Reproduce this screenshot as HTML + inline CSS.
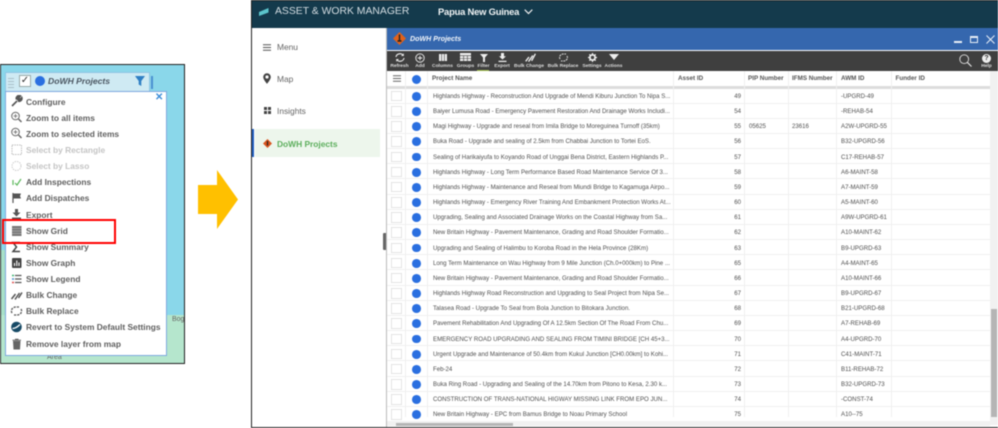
<!DOCTYPE html>
<html><head><meta charset="utf-8"><style>
*{box-sizing:border-box}
html,body{margin:0;padding:0;width:998px;height:428px;overflow:hidden;background:#fff;font-family:"Liberation Sans",sans-serif}
.a{position:absolute}
#soft{position:absolute;left:0;top:0;width:998px;height:428px;filter:blur(.4px)}
.mi{position:absolute;left:26px;font-size:8.4px;font-weight:bold;color:#5f5f5f;white-space:nowrap;line-height:12px}
.mi.d{color:#c4c4c4}
.ic{position:absolute;left:10px;width:13px;height:12px}
.tl{position:absolute;top:63.5px;font-size:4.9px;font-weight:bold;color:#ddd;transform:translateX(-50%);white-space:nowrap;line-height:6px}
.th{position:absolute;top:74px;font-size:6.3px;font-weight:bold;color:#555;white-space:nowrap;line-height:9px}
.r{position:absolute;left:387px;width:603px;height:15.17px;border-bottom:1.3px solid #f0f0f0}
.r span{position:absolute;top:3.5px;font-size:6.1px;color:#4f4f4f;white-space:nowrap;line-height:9px}
.r .cb{position:absolute;left:4px;top:2.6px;width:10.5px;height:10.5px;background:#fff;border:1px solid #e3e3e3}
.r .c{position:absolute;left:25.2px;top:3.5px;width:8.8px;height:8.8px;border-radius:50%;background:#2a6fe0}
.r .n{left:46px}.r .i{left:340px;width:14px;text-align:right}.r .w{left:454px}
.v{position:absolute;top:71px;height:346px;width:1px;background:#efefef}
</style></head><body><div id="soft">

<!-- LEFT MAP PANEL -->
<div class="a" style="left:0;top:64px;width:185px;height:300px;background:#8ad7ea;border:1.5px solid #222;overflow:hidden">
  <div class="a" style="left:0;top:185px;width:5px;height:115px;background:#a8e0c8"></div>
  <div class="a" style="left:0;top:250px;width:185px;height:50px;background:#b5e6cd"></div>
  <div class="a" style="left:171px;top:251px;font-size:7px;color:#666">Bog</div>
  <div class="a" style="left:46px;top:289px;font-size:7px;color:#666">Area</div>
  <div class="a" style="left:150px;top:11px;width:1.5px;height:13px;background:#4a90d0"></div>
</div>
<div class="a" style="left:5px;top:72px;width:145px;height:20px;background:#cfeaf3;border:1px solid #8fc4e4"></div>
<div class="a" style="left:8px;top:76px;width:6px;height:12px;background:repeating-linear-gradient(0deg,#a9c0c8 0 1px,transparent 1px 3px)"></div>
<div class="a" style="left:19px;top:75px;width:12px;height:12px;background:#fff;border:1px solid #9aa;font-size:10px;line-height:10px;color:#333;text-align:center">✓</div>
<div class="a" style="left:35px;top:76px;width:10px;height:10px;border-radius:50%;background:#2a6fe0"></div>
<div class="a" style="left:48px;top:76px;font-size:8.6px;font-weight:bold;font-style:italic;color:#4a5560;white-space:nowrap;line-height:10px">DoWH Projects</div>
<svg class="a" style="left:135px;top:76px" width="10" height="10" viewBox="0 0 10 10"><path d="M0 0H10L6.3 5V10L3.7 8.5V5Z" fill="#2f7fc4"/></svg>

<div class="a" style="left:5px;top:91px;width:162px;height:265px;background:#fff;border:1.3px solid #7ea9de"></div>
<div class="a" style="left:155px;top:92px;font-size:10px;color:#3c8dd8;line-height:11px;font-weight:bold">✕</div>

<div class="mi" style="top:95.5px">Configure</div>
<div class="mi" style="top:111.5px">Zoom to all items</div>
<div class="mi" style="top:127.5px">Zoom to selected items</div>
<div class="mi d" style="top:144px">Select by Rectangle</div>
<div class="mi d" style="top:160px">Select by Lasso</div>
<div class="mi" style="top:176px">Add Inspections</div>
<div class="mi" style="top:192px">Add Dispatches</div>
<div class="mi" style="top:208.5px">Export</div>
<div class="mi" style="top:224.5px">Show Grid</div>
<div class="mi" style="top:240.5px">Show Summary</div>
<div class="mi" style="top:256.5px">Show Graph</div>
<div class="mi" style="top:273px">Show Legend</div>
<div class="mi" style="top:289px">Bulk Change</div>
<div class="mi" style="top:305px">Bulk Replace</div>
<div class="mi" style="top:321px">Revert to System Default Settings</div>
<div class="mi" style="top:337.5px">Remove layer from map</div>

<!-- menu icons -->
<svg class="ic" style="top:95px" viewBox="0 0 13 12"><path d="M2 11L7 6M6.5 4.5A2.8 2.8 0 0 1 10.5 1L8.7 3L10 4.3L11.8 2.6A2.8 2.8 0 0 1 8 6" fill="#555" stroke="#555" stroke-width="1.6"/></svg>
<svg class="ic" style="top:111px" viewBox="0 0 13 12"><circle cx="5.5" cy="5" r="3.8" fill="none" stroke="#666"/><path d="M8.5 8L11.5 11" stroke="#666" stroke-width="1.5"/><path d="M3.5 5H7.5M5.5 3V7" stroke="#666" stroke-width=".8"/></svg>
<svg class="ic" style="top:127px" viewBox="0 0 13 12"><circle cx="5.5" cy="5" r="3.8" fill="none" stroke="#666"/><path d="M8.5 8L11.5 11" stroke="#666" stroke-width="1.5"/><path d="M3.5 5H7.5M5.5 3V7" stroke="#666" stroke-width=".8"/></svg>
<svg class="ic" style="top:144px" viewBox="0 0 13 12"><rect x="2" y="1" width="9.5" height="9.5" fill="none" stroke="#bbb" stroke-dasharray="1.4 1"/></svg>
<svg class="ic" style="top:160px" viewBox="0 0 13 12"><circle cx="6.5" cy="6" r="4.5" fill="none" stroke="#ccc" stroke-dasharray="1.4 1"/></svg>
<svg class="ic" style="top:176px" viewBox="0 0 13 12"><path d="M3 4V9M5 7L7 9L11 3" fill="none" stroke="#5cb85c" stroke-width="1.2"/></svg>
<svg class="ic" style="top:192px" viewBox="0 0 13 12"><path d="M3 1V11" stroke="#555" stroke-width="1.2"/><path d="M3 1.5H11L10 4L11 6.5H3Z" fill="#555"/></svg>
<svg class="ic" style="top:208px" viewBox="0 0 13 12"><path d="M5 1H8V4.5H10.5L6.5 8.5L2.5 4.5H5ZM2 9.5H11V11H2Z" fill="#555"/></svg>
<svg class="ic" style="top:224.5px" viewBox="0 0 13 12"><rect x="2" y="1" width="9.5" height="10" fill="#777"/><path d="M2 3.5H11.5M2 6H11.5M2 8.5H11.5" stroke="#ccc" stroke-width=".6"/></svg>
<svg class="ic" style="top:240.5px" viewBox="0 0 13 12"><path d="M10 1.5H3L6.5 6L3 10.5H10" fill="none" stroke="#444" stroke-width="1.5"/></svg>
<svg class="ic" style="top:257px" viewBox="0 0 13 12"><rect x="2" y="1" width="9.5" height="10" rx="1" fill="#444"/><path d="M4.5 9V6M6.8 9V3.5M9 9V5.5" stroke="#fff" stroke-width="1.1"/></svg>
<svg class="ic" style="top:273px" viewBox="0 0 13 12"><path d="M2 2.5H4" stroke="#3cb371" stroke-width="1.5"/><path d="M2 6H4" stroke="#4a90d0" stroke-width="1.5"/><path d="M2 9.5H4" stroke="#e05050" stroke-width="1.5"/><path d="M5 2.5H11.5M5 6H11.5M5 9.5H11.5" stroke="#555" stroke-width="1.2"/></svg>
<svg class="ic" style="top:289px" viewBox="0 0 13 12"><path d="M1.5 10L5.5 5M5 10.5L9.5 4M8.5 9L12 3.5" stroke="#555" stroke-width="1.5" fill="none"/></svg>
<svg class="ic" style="top:305px" viewBox="0 0 13 12"><path d="M2 8A4.5 4 0 0 1 6 2H9M11 4A4.5 4 0 0 1 7 10H4" fill="none" stroke="#555" stroke-width="1.3" stroke-dasharray="2.2 1"/></svg>
<svg class="ic" style="top:321px" viewBox="0 0 13 12"><circle cx="6.5" cy="6" r="5.3" fill="#174a66"/><path d="M2.5 7.5Q6 7.5 10 3.5" stroke="#fff" stroke-width="1.3" fill="none"/></svg>
<svg class="ic" style="top:337.5px" viewBox="0 0 13 12"><path d="M3 3H10.5L10 11.5H3.5ZM2.5 1.8H11V2.8H2.5ZM5 .8H8.5V1.8H5Z" fill="#666"/></svg>

<!-- red box -->
<div class="a" style="left:2px;top:219px;width:114px;height:25px;border:2.3px solid #f00"></div>

<!-- ARROW -->
<svg class="a" style="left:198px;top:170px" width="41" height="60" viewBox="0 0 41 60"><path d="M0 15H19V0L40 29.5L19 59V44H0Z" fill="#ffc000"/></svg>

<!-- RIGHT WINDOW -->
<div class="a" style="left:251px;top:0;width:747px;height:428px;background:#fff;border:1.5px solid #222;border-right:0"></div>
<div class="a" style="left:252px;top:1px;width:746px;height:27px;background:#143a4c"></div>
<svg class="a" style="left:259px;top:8px" width="10" height="8" viewBox="0 0 10 8"><path d="M0 4L9.5 0V4.5L0 8Z" fill="#5cc5cc"/></svg>
<div class="a" style="left:275px;top:4.5px;font-size:10.4px;color:#d4dde2;white-space:nowrap;line-height:14px">ASSET &amp; WORK MANAGER</div>
<div class="a" style="left:438px;top:5px;font-size:9.4px;font-weight:bold;letter-spacing:-.2px;color:#f2f5f6;white-space:nowrap;line-height:14px">Papua New Guinea</div>
<svg class="a" style="left:524px;top:9px" width="9" height="6" viewBox="0 0 9 6"><path d="M.7 .7L4.5 4.5L8.3 .7" fill="none" stroke="#eee" stroke-width="1.2"/></svg>

<!-- sidebar -->
<svg class="a" style="left:263px;top:44px" width="8" height="7" viewBox="0 0 8 7"><path d="M0 .8H8M0 3.5H8M0 6.2H8" stroke="#555" stroke-width="1"/></svg>
<div class="a" style="left:277px;top:41px;font-size:8.4px;color:#666;line-height:12px">Menu</div>
<svg class="a" style="left:263px;top:73px" width="8" height="11" viewBox="0 0 8 11"><path d="M4 0.2A3.8 3.8 0 0 1 7.8 4C7.8 6.5 4 10.8 4 10.8S.2 6.5 .2 4A3.8 3.8 0 0 1 4 .2Z" fill="#444"/><circle cx="4" cy="4" r="1.6" fill="#fff"/></svg>
<div class="a" style="left:277px;top:73px;font-size:8.4px;color:#666;line-height:12px">Map</div>
<svg class="a" style="left:264px;top:107px" width="7" height="7" viewBox="0 0 7 7"><path d="M0 0H3V3H0ZM4 0H7V3H4ZM0 4H3V7H0ZM4 4H7V7H4Z" fill="#444"/></svg>
<div class="a" style="left:277px;top:105px;font-size:8.4px;color:#666;line-height:12px">Insights</div>
<div class="a" style="left:252px;top:129px;width:2px;height:28px;background:#1f5fc0"></div>
<div class="a" style="left:255px;top:129px;width:125px;height:28px;background:#edf6ec"></div>
<svg class="a" style="left:263px;top:139px" width="9" height="9" viewBox="0 0 9 9"><path d="M4.5 0L9 4.5L4.5 9L0 4.5Z" fill="#d9541e"/><path d="M4.5 2V6.5" stroke="#222" stroke-width="1.2"/></svg>
<div class="a" style="left:277px;top:138px;font-size:8.4px;font-weight:bold;color:#5cae5c;line-height:12px;white-space:nowrap">DoWH Projects</div>
<div class="a" style="left:383px;top:233px;width:4px;height:17px;background:#666;border-radius:1px"></div>
<div class="a" style="left:994px;top:233px;width:4px;height:17px;background:#666;border-radius:1px"></div>

<!-- window title -->
<div class="a" style="left:386px;top:28px;width:612px;height:22px;background:#3567ae"></div>
<div class="a" style="left:386px;top:28px;width:1px;height:400px;background:#bbb"></div>
<svg class="a" style="left:393px;top:32px" width="13" height="13" viewBox="0 0 13 13"><path d="M6.5 0L13 6.5L6.5 13L0 6.5Z" fill="#e2621b"/><path d="M6.5 2.5V9M4.5 9H8.5" stroke="#222" stroke-width="1.4" fill="none"/></svg>
<div class="a" style="left:410px;top:34px;font-size:7.1px;font-weight:bold;font-style:italic;color:#f2f5fa;white-space:nowrap;line-height:10px">DoWH Projects</div>
<div class="a" style="left:954px;top:41px;width:8px;height:1.6px;background:#e8eef6"></div>
<div class="a" style="left:970px;top:36px;width:8px;height:7px;border:1px solid #e8eef6;border-top-width:2px"></div>
<svg class="a" style="left:986px;top:35px" width="9" height="9" viewBox="0 0 9 9"><path d="M.5 .5L8.5 8.5M8.5 .5L.5 8.5" stroke="#e8eef6" stroke-width="1"/></svg>

<!-- toolbar -->
<div class="a" style="left:387px;top:51px;width:611px;height:20px;background:#3f3f3f"></div>
<svg class="a" style="left:394.5px;top:53px" width="10" height="9" viewBox="0 0 10 9"><path d="M1 4A4 3.6 0 0 1 8 2M9 5A4 3.6 0 0 1 2 7" fill="none" stroke="#eee" stroke-width="1.1"/><path d="M8.8 .3V3H6ZM1.2 8.7V6H4Z" fill="#eee"/></svg>
<svg class="a" style="left:415px;top:53px" width="10" height="10" viewBox="0 0 10 10"><circle cx="5" cy="5" r="4.2" fill="none" stroke="#eee" stroke-width=".9"/><path d="M2.7 5H7.3M5 2.7V7.3" stroke="#eee" stroke-width=".9"/></svg>
<svg class="a" style="left:439px;top:54px" width="8" height="7" viewBox="0 0 8 7"><path d="M0 0H2.3V7H0ZM2.9 0H5.1V7H2.9ZM5.7 0H8V7H5.7Z" fill="#eee"/></svg>
<svg class="a" style="left:460px;top:53px" width="11" height="8" viewBox="0 0 11 8"><path d="M0 0H11V2.4H0ZM0 3H3.3V5.2H0ZM3.9 3H7.1V5.2H3.9ZM7.7 3H11V5.2H7.7ZM0 5.8H3.3V8H0ZM3.9 5.8H7.1V8H3.9ZM7.7 5.8H11V8H7.7Z" fill="#eee"/></svg>
<svg class="a" style="left:479.5px;top:54px" width="8" height="8" viewBox="0 0 8 8"><path d="M0 0H8L5 3.5V8H3V3.5Z" fill="#eee"/></svg>
<div class="a" style="left:477px;top:69.5px;width:12px;height:1.3px;background:#a3c24a"></div>
<svg class="a" style="left:497.5px;top:53px" width="9" height="9" viewBox="0 0 9 9"><path d="M3 0H6V3.2H8L4.5 6.5L1 3.2H3ZM.5 7.7H8.5V9H.5Z" fill="#eee"/></svg>
<svg class="a" style="left:525px;top:53px" width="11" height="9" viewBox="0 0 11 9"><path d="M.7 8.3L4 4M3.5 8.6L7.8 2.5M6.6 7.8L10.4 .8" stroke="#eee" stroke-width="1.4" fill="none"/></svg>
<svg class="a" style="left:558.5px;top:53px" width="9" height="9" viewBox="0 0 9 9"><path d="M1 6A3.6 3.4 0 0 1 4 1H7M8 3A3.6 3.4 0 0 1 5 8H2" fill="none" stroke="#ddd" stroke-width="1" stroke-dasharray="2 .8"/></svg>
<svg class="a" style="left:588px;top:53px" width="9" height="9" viewBox="0 0 9 9"><circle cx="4.5" cy="4.5" r="2.6" fill="none" stroke="#eee" stroke-width="1.8"/><path d="M4.5 0V1.8M4.5 7.2V9M0 4.5H1.8M7.2 4.5H9M1.3 1.3L2.5 2.5M6.5 6.5L7.7 7.7M7.7 1.3L6.5 2.5M2.5 6.5L1.3 7.7" stroke="#eee" stroke-width="1.2"/></svg>
<svg class="a" style="left:609px;top:54px" width="10" height="6" viewBox="0 0 10 6"><path d="M0 0H10L5 6Z" fill="#eee"/></svg>
<div class="tl" style="left:399.5px">Refresh</div><div class="tl" style="left:420px">Add</div><div class="tl" style="left:442.5px">Columns</div><div class="tl" style="left:465.5px">Groups</div><div class="tl" style="left:483.5px">Filter</div><div class="tl" style="left:502px">Export</div><div class="tl" style="left:529px">Bulk Change</div><div class="tl" style="left:563px">Bulk Replace</div><div class="tl" style="left:592px">Settings</div><div class="tl" style="left:613.5px">Actions</div><div class="tl" style="left:986.5px">Help</div>
<svg class="a" style="left:959px;top:54px" width="13" height="13" viewBox="0 0 13 13"><circle cx="5.2" cy="5.2" r="4.4" fill="none" stroke="#e0e0e0" stroke-width=".9"/><path d="M8.4 8.4L12.5 12.5" stroke="#e0e0e0" stroke-width="1.2"/></svg>
<div class="a" style="left:982px;top:53.5px;width:9px;height:9px;border-radius:50%;background:#eee;color:#333;font-size:7px;font-weight:bold;text-align:center;line-height:9px">?</div>

<!-- grid header -->
<svg class="a" style="left:392.5px;top:75px" width="8" height="7" viewBox="0 0 8 7"><path d="M0 .8H8M0 3.5H8M0 6.2H8" stroke="#666" stroke-width="1"/></svg>
<div class="a" style="left:412px;top:74.5px;width:9px;height:9px;border-radius:50%;background:#2a6fe0"></div>
<div class="th" style="left:432px">Project Name</div><div class="th" style="left:678px">Asset ID</div><div class="th" style="left:748px">PIP Number</div><div class="th" style="left:792px">IFMS Number</div><div class="th" style="left:841px">AWM ID</div><div class="th" style="left:895.5px">Funder ID</div>
<div class="a" style="left:387px;top:86px;width:603px;height:2.5px;background:#dcdcdc"></div>

<!-- rows -->
<div class="r" style="top:88.4px"><i class="cb"></i><i class="c"></i><span class="n">Highlands Highway - Reconstruction And Upgrade of Mendi Kiburu Junction To Nipa S...</span><span class="i">49</span><span class="w">-UPGRD-49</span></div>
<div class="r" style="top:103.6px"><i class="cb"></i><i class="c"></i><span class="n">Baiyer Lumusa Road - Emergency Pavement Restoration And Drainage Works Includi...</span><span class="i">54</span><span class="w">-REHAB-54</span></div>
<div class="r" style="top:118.7px"><i class="cb"></i><i class="c"></i><span class="n">Magi Highway - Upgrade and reseal from Imila Bridge to Moreguinea Turnoff (35km)</span><span class="i">55</span><span style="left:362px">05625</span><span style="left:405px">23616</span><span class="w">A2W-UPGRD-55</span></div>
<div class="r" style="top:133.9px"><i class="cb"></i><i class="c"></i><span class="n">Buka Road - Upgrade and sealing of 2.5km from Chabbai Junction to Tortei EoS.</span><span class="i">56</span><span class="w">B32-UPGRD-56</span></div>
<div class="r" style="top:149.1px"><i class="cb"></i><i class="c"></i><span class="n">Sealing of Harikaiyufa to Koyando Road of Unggai Bena District, Eastern Highlands P...</span><span class="i">57</span><span class="w">C17-REHAB-57</span></div>
<div class="r" style="top:164.3px"><i class="cb"></i><i class="c"></i><span class="n">Highlands Highway - Long Term Performance Based Road Maintenance Service Of 3...</span><span class="i">58</span><span class="w">A6-MAINT-58</span></div>
<div class="r" style="top:179.4px"><i class="cb"></i><i class="c"></i><span class="n">Highlands Highway - Maintenance and Reseal from Miundi Bridge to Kagamuga Airpo...</span><span class="i">59</span><span class="w">A7-MAINT-59</span></div>
<div class="r" style="top:194.6px"><i class="cb"></i><i class="c"></i><span class="n">Highlands Highway - Emergency River Training And Embankment Protection Works At...</span><span class="i">60</span><span class="w">A5-MAINT-60</span></div>
<div class="r" style="top:209.8px"><i class="cb"></i><i class="c"></i><span class="n">Upgrading, Sealing and Associated Drainage Works on the Coastal Highway from Sa...</span><span class="i">61</span><span class="w">A9W-UPGRD-61</span></div>
<div class="r" style="top:224.9px"><i class="cb"></i><i class="c"></i><span class="n">New Britain Highway - Pavement Maintenance, Grading and Road Shoulder Formatio...</span><span class="i">62</span><span class="w">A10-MAINT-62</span></div>
<div class="r" style="top:240.1px"><i class="cb"></i><i class="c"></i><span class="n">Upgrading and Sealing of Halimbu to Koroba Road in the Hela Province (28Km)</span><span class="i">63</span><span class="w">B9-UPGRD-63</span></div>
<div class="r" style="top:255.3px"><i class="cb"></i><i class="c"></i><span class="n">Long Term Maintenance on Wau Highway from 9 Mile Junction (Ch.0+000km) to Pine ...</span><span class="i">65</span><span class="w">A4-MAINT-65</span></div>
<div class="r" style="top:270.4px"><i class="cb"></i><i class="c"></i><span class="n">New Britain Highway - Pavement Maintenance, Grading and Road Shoulder Formatio...</span><span class="i">66</span><span class="w">A10-MAINT-66</span></div>
<div class="r" style="top:285.6px"><i class="cb"></i><i class="c"></i><span class="n">Highlands Highway Road Reconstruction and Upgrading to Seal Project from Nipa Se...</span><span class="i">67</span><span class="w">B9-UPGRD-67</span></div>
<div class="r" style="top:300.8px"><i class="cb"></i><i class="c"></i><span class="n">Talasea Road - Upgrade To Seal from Bola Junction to Bitokara Junction.</span><span class="i">68</span><span class="w">B21-UPGRD-68</span></div>
<div class="r" style="top:315.9px"><i class="cb"></i><i class="c"></i><span class="n">Pavement Rehabilitation And Upgrading Of A 12.5km Section Of The Road From Chu...</span><span class="i">69</span><span class="w">A7-REHAB-69</span></div>
<div class="r" style="top:331.1px"><i class="cb"></i><i class="c"></i><span class="n">EMERGENCY ROAD UPGRADING AND SEALING FROM TIMINI BRIDGE [CH 45+3...</span><span class="i">70</span><span class="w">A4-UPGRD-70</span></div>
<div class="r" style="top:346.3px"><i class="cb"></i><i class="c"></i><span class="n">Urgent Upgrade and Maintenance of 50.4km from Kukul Junction [CH0.00km] to Kohi...</span><span class="i">71</span><span class="w">C41-MAINT-71</span></div>
<div class="r" style="top:361.4px"><i class="cb"></i><i class="c"></i><span class="n">Feb-24</span><span class="i">72</span><span class="w">B11-REHAB-72</span></div>
<div class="r" style="top:376.6px"><i class="cb"></i><i class="c"></i><span class="n">Buka Ring Road - Upgrading and Sealing of the 14.70km from Pitono to Kesa, 2.30 k...</span><span class="i">73</span><span class="w">B32-UPGRD-73</span></div>
<div class="r" style="top:391.8px"><i class="cb"></i><i class="c"></i><span class="n">CONSTRUCTION OF TRANS-NATIONAL HIGWAY MISSING LINK FROM EPO JUN...</span><span class="i">74</span><span class="w">-CONST-74</span></div>
<div class="r" style="top:406.9px"><i class="cb"></i><i class="c"></i><span class="n">New Britain Highway - EPC from Bamus Bridge to Noau Primary School</span><span class="i">75</span><span class="w">A10--75</span></div>

<div class="v" style="left:405px"></div><div class="v" style="left:427px"></div><div class="v" style="left:673px"></div><div class="v" style="left:744px"></div><div class="v" style="left:788px"></div><div class="v" style="left:836px"></div><div class="v" style="left:891px"></div>

<!-- scrollbars -->
<div class="a" style="left:990px;top:71px;width:8px;height:354px;background:#f1f1f1"></div>
<div class="a" style="left:990.5px;top:309px;width:6.5px;height:108px;background:#b5b5b5"></div>
<div class="a" style="left:387px;top:421px;width:603px;height:5px;background:#f1f1f1"></div>
<div class="a" style="left:396px;top:423px;width:117px;height:3px;background:#b5b5b5"></div>
<div class="a" style="left:252px;top:426.5px;width:746px;height:1.5px;background:#222"></div>
</div></body></html>
